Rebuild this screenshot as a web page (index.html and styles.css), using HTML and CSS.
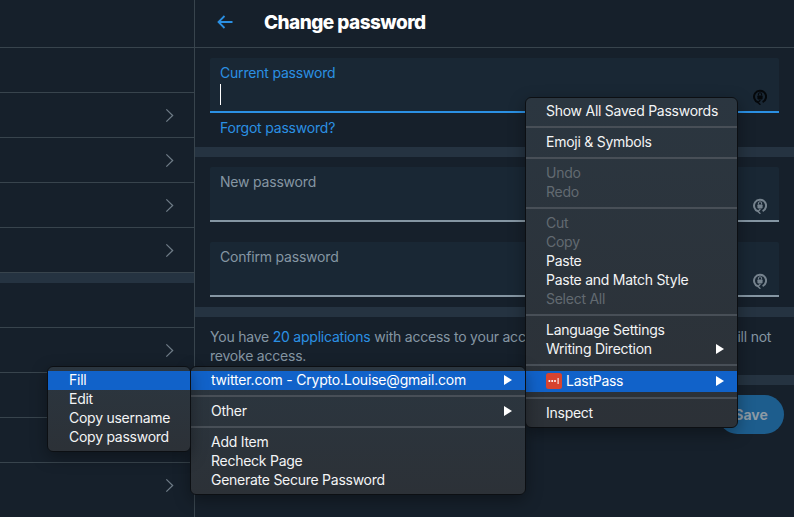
FILE: index.html
```html
<!DOCTYPE html>
<html lang="en">
<head>
<meta charset="utf-8">
<title>Change password</title>
<link rel="stylesheet" href="styles.css">
</head>
<body>
<svg class="defs" width="0" height="0" aria-hidden="true">
  <symbol id="chev" viewBox="0 0 10 16"><path d="M1.5 1.2 8.5 8 1.5 14.8" fill="none" stroke="currentColor" stroke-width="1.4"/></symbol>
  <symbol id="key" viewBox="0 0 14 16">
    <path d="M5 13.3A6 6 0 1 1 9.6 13.1" fill="none" stroke="currentColor" stroke-width="2"/>
    <path d="M7.4 15.8 5 13.4 7.4 11" fill="none" stroke="currentColor" stroke-width="1.4"/>
    <rect x="4.4" y="6.4" width="5.2" height="4" rx=".8" fill="currentColor"/>
    <path d="M5.4 6.6V5.4a1.6 1.6 0 0 1 3.2 0v1.2" fill="none" stroke="currentColor" stroke-width="1.1"/>
  </symbol>
  <symbol id="tri" viewBox="0 0 8 10"><path d="M0 0 8 5 0 10Z" fill="currentColor"/></symbol>
</svg>
<div class="app">
  <aside class="side">
    <div class="side-head"></div>
    <div class="side-row"></div>
    <div class="side-row"><svg class="chev"><use href="#chev"/></svg></div>
    <div class="side-row"><svg class="chev"><use href="#chev"/></svg></div>
    <div class="side-row"><svg class="chev"><use href="#chev"/></svg></div>
    <div class="side-row"><svg class="chev"><use href="#chev"/></svg></div>
    <div class="band side-band"></div>
    <div class="side-row"></div>
    <div class="side-row"><svg class="chev"><use href="#chev"/></svg></div>
    <div class="side-row"><svg class="chev"><use href="#chev"/></svg></div>
    <div class="side-row"><svg class="chev"><use href="#chev"/></svg></div>
    <div class="side-row last"><svg class="chev"><use href="#chev"/></svg></div>
  </aside>
  <main class="main">
    <header class="head">
      <svg class="back" viewBox="0 0 16 14"><path d="M15.5 7H1.5M7.5 1 1.5 7l6 6" fill="none" stroke="currentColor" stroke-width="1.8"/></svg>
      <h1 class="title">Change password</h1>
    </header>
    <section class="group first">
      <div class="field active">
        <div class="field-body">
          <span class="label">Current password</span>
          <span class="caret"></span>
        </div>
        <svg class="key dark"><use href="#key"/></svg>
      </div>
      <a class="forgot">Forgot password?</a>
    </section>
    <div class="band"></div>
    <section class="group second">
      <div class="field">
        <div class="field-body"><span class="label">New password</span></div>
        <svg class="key"><use href="#key"/></svg>
      </div>
      <div class="field">
        <div class="field-body"><span class="label">Confirm password</span></div>
        <svg class="key"><use href="#key"/></svg>
      </div>
    </section>
    <div class="band"></div>
    <p class="note">You have <a class="link">20 applications</a> with access to your account. Changing your password will not revoke access.</p>
    <div class="band"></div>
    <div class="actions"><button class="save">Save</button></div>
  </main>
</div>

<nav class="menu menu-main">
  <div class="item">Show All Saved Passwords</div>
  <div class="sep"></div>
  <div class="item">Emoji &amp; Symbols</div>
  <div class="sep"></div>
  <div class="item off">Undo</div>
  <div class="item off">Redo</div>
  <div class="sep"></div>
  <div class="item off">Cut</div>
  <div class="item off">Copy</div>
  <div class="item">Paste</div>
  <div class="item">Paste and Match Style</div>
  <div class="item off">Select All</div>
  <div class="sep"></div>
  <div class="item">Language Settings</div>
  <div class="item">Writing Direction<svg class="tri"><use href="#tri"/></svg></div>
  <div class="sep"></div>
  <div class="item sel tall">
    <svg class="lp" viewBox="0 0 16 16"><rect width="16" height="16" rx="2.5" fill="#d8432f"/><circle cx="3.4" cy="8" r="1" fill="#fff"/><circle cx="6.2" cy="8" r="1" fill="#fff"/><circle cx="9" cy="8" r="1" fill="#fff"/><rect x="11.6" y="5" width="1" height="6" fill="#fff"/></svg>
    LastPass<svg class="tri"><use href="#tri"/></svg>
  </div>
  <div class="sep"></div>
  <div class="item">Inspect</div>
</nav>

<nav class="menu menu-site">
  <div class="item sel wide">twitter.com - Crypto.Louise@gmail.com<svg class="tri"><use href="#tri"/></svg></div>
  <div class="sep"></div>
  <div class="item">Other<svg class="tri"><use href="#tri"/></svg></div>
  <div class="sep"></div>
  <div class="item">Add Item</div>
  <div class="item">Recheck Page</div>
  <div class="item">Generate Secure Password</div>
</nav>

<nav class="menu menu-act">
  <div class="item sel">Fill</div>
  <div class="item">Edit</div>
  <div class="item">Copy username</div>
  <div class="item">Copy password</div>
</nav>
</body>
</html>
```
FILE: styles.css
```css
* { box-sizing: border-box; }
html, body { margin: 0; height: 517px; overflow: hidden; }
body {
  position: relative;
  background: #16202b;
  font-family: Inter, "Liberation Sans", sans-serif;
  color: #fff;
}
.defs { position: absolute; }
.app { display: flex; height: 517px; }

.side { width: 195px; flex: none; border-right: 1px solid #38444d; }
.side-head { height: 48px; border-bottom: 1px solid #38444d; }
.side-row {
  height: 45px;
  border-bottom: 1px solid #38444d;
  display: flex;
  align-items: center;
  justify-content: flex-end;
  padding-right: 20px;
}
.side-row.last { border-bottom: 0; height: 44px; }
.side-band { height: 11px; }
.chev { width: 9px; height: 15px; color: #6f7c87; }

.band { height: 10px; background: #253341; flex: none; }

.main { flex: 1; display: flex; flex-direction: column; min-width: 0; }
.head {
  height: 48px;
  flex: none;
  border-bottom: 1px solid #38444d;
  display: flex;
  align-items: center;
  padding: 0 0 3px 22px;
}
.back { width: 16px; height: 14px; color: #2b90e3; flex: none; }
.title {
  margin: 0 0 0 31px;
  font-size: 19px;
  font-weight: 800;
  letter-spacing: -.55px;
  color: #fff;
}

.group { padding: 10px 15px; display: flex; flex-direction: column; }
.group.second { gap: 20px; }
.group.first { padding-bottom: 0; height: 99px; }

.field {
  height: 55px;
  flex: none;
  background: #192734;
  border-bottom: 2px solid #8596a3;
  border-radius: 2px 2px 0 0;
  display: flex;
  justify-content: space-between;
  padding: 5px 12px 6px 10px;
}
.field.active { border-bottom-color: #2b90e3; }
.field-body { display: flex; flex-direction: column; }
.label { font-size: 14px; line-height: 20px; color: #8596a3; letter-spacing: -.2px; }
.active .label { color: #2b90e3; }
.caret { width: 1px; height: 22px; background: #fff; margin-top: 1px; }
.key { width: 14px; height: 16px; align-self: flex-end; color: #76838e; }
.key.dark { color: #05080b; }

.forgot { font-size: 14px; line-height: 20px; color: #2b90e3; margin: 5px 0 0 10px; letter-spacing: -.2px; }

.note {
  margin: 0;
  height: 58px;
  padding: 10px 9px 0 15px;
  font-size: 14px;
  line-height: 19px;
  color: #8596a3;
  letter-spacing: -.22px;
}
.link { color: #2b90e3; }

.actions { display: flex; justify-content: flex-end; padding: 10px 10px 0 0; }
.save {
  width: 66px;
  height: 39px;
  border: 0;
  border-radius: 20px;
  background: #1d5d8d;
  color: #8c9aa5;
  font: 700 14px Inter, "Liberation Sans", sans-serif;
}

.menu {
  position: absolute;
  background: linear-gradient(#2b3640, #2c3137);
  border: 1px solid #0c0f13;
  border-radius: 6px;
  box-shadow: 0 5px 16px rgba(0, 0, 0, .35);
  padding: 4px 0;
  font-size: 14px;
  color: #f3f4f5;
}
.menu-main { left: 525px; top: 97px; width: 213px; height: 331px; }
.menu-site { left: 190px; top: 366px; width: 336px; height: 129px; }
.menu-act { left: 47px; top: 366px; width: 144px; height: 86px; }

.item {
  height: 19px;
  padding-bottom: 2px;
  display: flex;
  align-items: center;
  white-space: nowrap;
  letter-spacing: -.26px;
}
.menu-main .item { padding-left: 20px; padding-right: 13px; }
.menu-site .item { padding-left: 20px; padding-right: 13px; }
.menu-act .item { padding-left: 21px; padding-right: 10px; }
.item.off { color: #626a71; }
.item.sel { background: #1162c9; color: #fff; }
.item.wide { letter-spacing: -.19px; }
.item.tall { height: 21px; }
.sep { height: 12px; display: flex; align-items: center; }
.sep::before { content: ""; display: block; width: 100%; height: 2px; background: #484f57; }
.tri { width: 8px; height: 10px; margin-left: auto; color: #fff; }
.lp { width: 16px; height: 16px; margin-right: 4px; flex: none; }
```
